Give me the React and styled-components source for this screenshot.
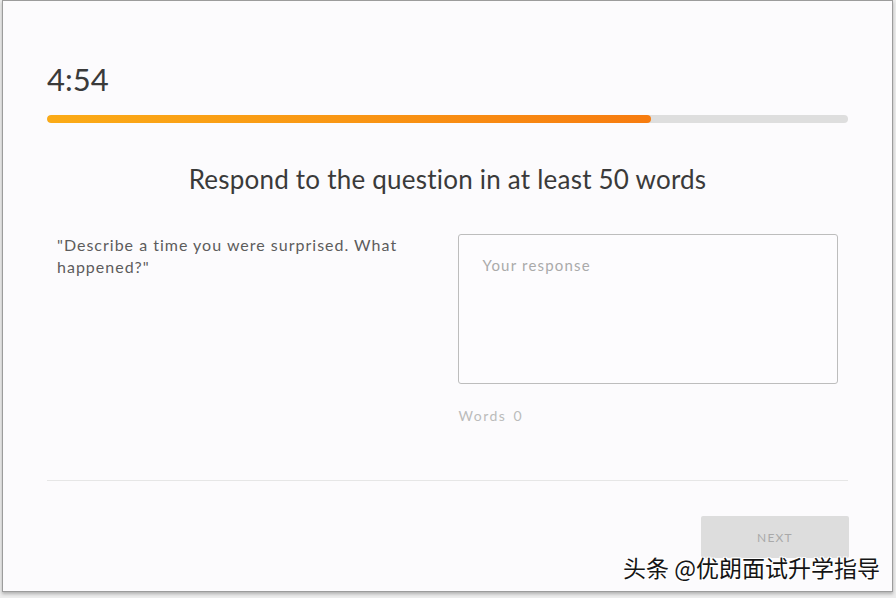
import React, { useState } from 'react';
import styled, { createGlobalStyle } from 'styled-components';

const GlobalStyle = createGlobalStyle`
  html, body {
    margin: 0;
    padding: 0;
    background: #ececec;
  }
  * {
    box-sizing: border-box;
  }
`;

const Page = styled.div`
  position: relative;
  width: 896px;
  height: 598px;
  padding-left: 2px;
  overflow: hidden;
`;

const Card = styled.div`
  width: 891px;
  height: 592px;
  background: #fcfbfd;
  border: 1px solid #9c9c9c;
  box-shadow: 0 2px 3px rgba(0, 0, 0, 0.25);
  padding: 60px 44px 0 44px;
  font-family: Lato, "Open Sans", sans-serif;
`;

const Timer = styled.div`
  font-size: 31px;
  line-height: 36px;
  color: #3a3a3a;
`;

const Track = styled.div`
  margin-top: 18px;
  height: 8px;
  border-radius: 4px;
  background: #dedede;
  overflow: hidden;
`;

const Fill = styled.div`
  height: 100%;
  border-radius: 4px;
  background: linear-gradient(90deg, #fbab17 0%, #f99614 50%, #f77c10 100%);
`;

const Heading = styled.h2`
  margin: 41px 0 0;
  font-size: 26px;
  line-height: 30px;
  font-weight: 400;
  letter-spacing: 0.22px;
  color: #3a3a3a;
  text-align: center;
`;

const Columns = styled.div`
  margin-top: 40px;
  display: grid;
  grid-template-columns: 1fr 1fr;
`;

const Column = styled.div`
  padding: 0 10px;
`;

const Prompt = styled.p`
  margin: 0;
  font-size: 16px;
  line-height: 22px;
  letter-spacing: 1px;
  color: #5c5c5c;
  padding-right: 10px;
`;

const Response = styled.textarea`
  display: block;
  width: 100%;
  height: 150px;
  resize: none;
  border: 1px solid #bdbdbd;
  border-radius: 3px;
  background: #fdfcfe;
  padding: 20px 24px;
  font-family: Lato, "Open Sans", sans-serif;
  font-size: 15px;
  line-height: 20px;
  letter-spacing: 1.2px;
  color: #444;
  outline: none;

  &::placeholder {
    color: #aaa;
  }
`;

const WordCount = styled.div`
  margin: 22px 0 0 1px;
  font-size: 14px;
  line-height: 20px;
  color: #bbb;
  letter-spacing: 1.5px;
  word-spacing: 2px;
`;

const Divider = styled.hr`
  margin: 54px 0 0;
  border: none;
  border-top: 1px solid #e6e6e6;
`;

const Footer = styled.div`
  margin-top: 35px;
  display: flex;
  justify-content: flex-end;
`;

const NextButton = styled.button`
  width: 148px;
  height: 42px;
  margin-right: -1px;
  border: none;
  border-radius: 2px;
  background: #dddddd;
  color: #a9a9a9;
  font-family: Lato, "Open Sans", sans-serif;
  font-size: 12px;
  letter-spacing: 1.2px;
  cursor: not-allowed;
`;

const Watermark = styled.div`
  position: absolute;
  left: 623px;
  top: 553px;
  font-family: "Noto Sans CJK SC", sans-serif;
  font-size: 23px;
  line-height: 28px;
  color: #151515;
  text-shadow: 1px 1px 0 #fff, -1px -1px 0 #fff, 1px -1px 0 #fff, -1px 1px 0 #fff;
  white-space: nowrap;
`;

const App = () => {
  const [text, setText] = useState('');
  const words = text.trim() ? text.trim().split(/\s+/).length : 0;

  return (
    <Page>
      <GlobalStyle />
      <Card>
        <Timer>4:54</Timer>
        <Track>
          <Fill style={{ width: '75.4%' }} />
        </Track>
        <Heading>Respond to the question in at least 50 words</Heading>
        <Columns>
          <Column>
            <Prompt>"Describe a time you were surprised. What happened?"</Prompt>
          </Column>
          <Column>
            <Response
              placeholder="Your response"
              value={text}
              onChange={(e) => setText(e.target.value)}
            />
            <WordCount>Words {words}</WordCount>
          </Column>
        </Columns>
        <Divider />
        <Footer>
          <NextButton disabled>NEXT</NextButton>
        </Footer>
      </Card>
      <Watermark>头条 @优朗面试升学指导</Watermark>
    </Page>
  );
};

export default App;
